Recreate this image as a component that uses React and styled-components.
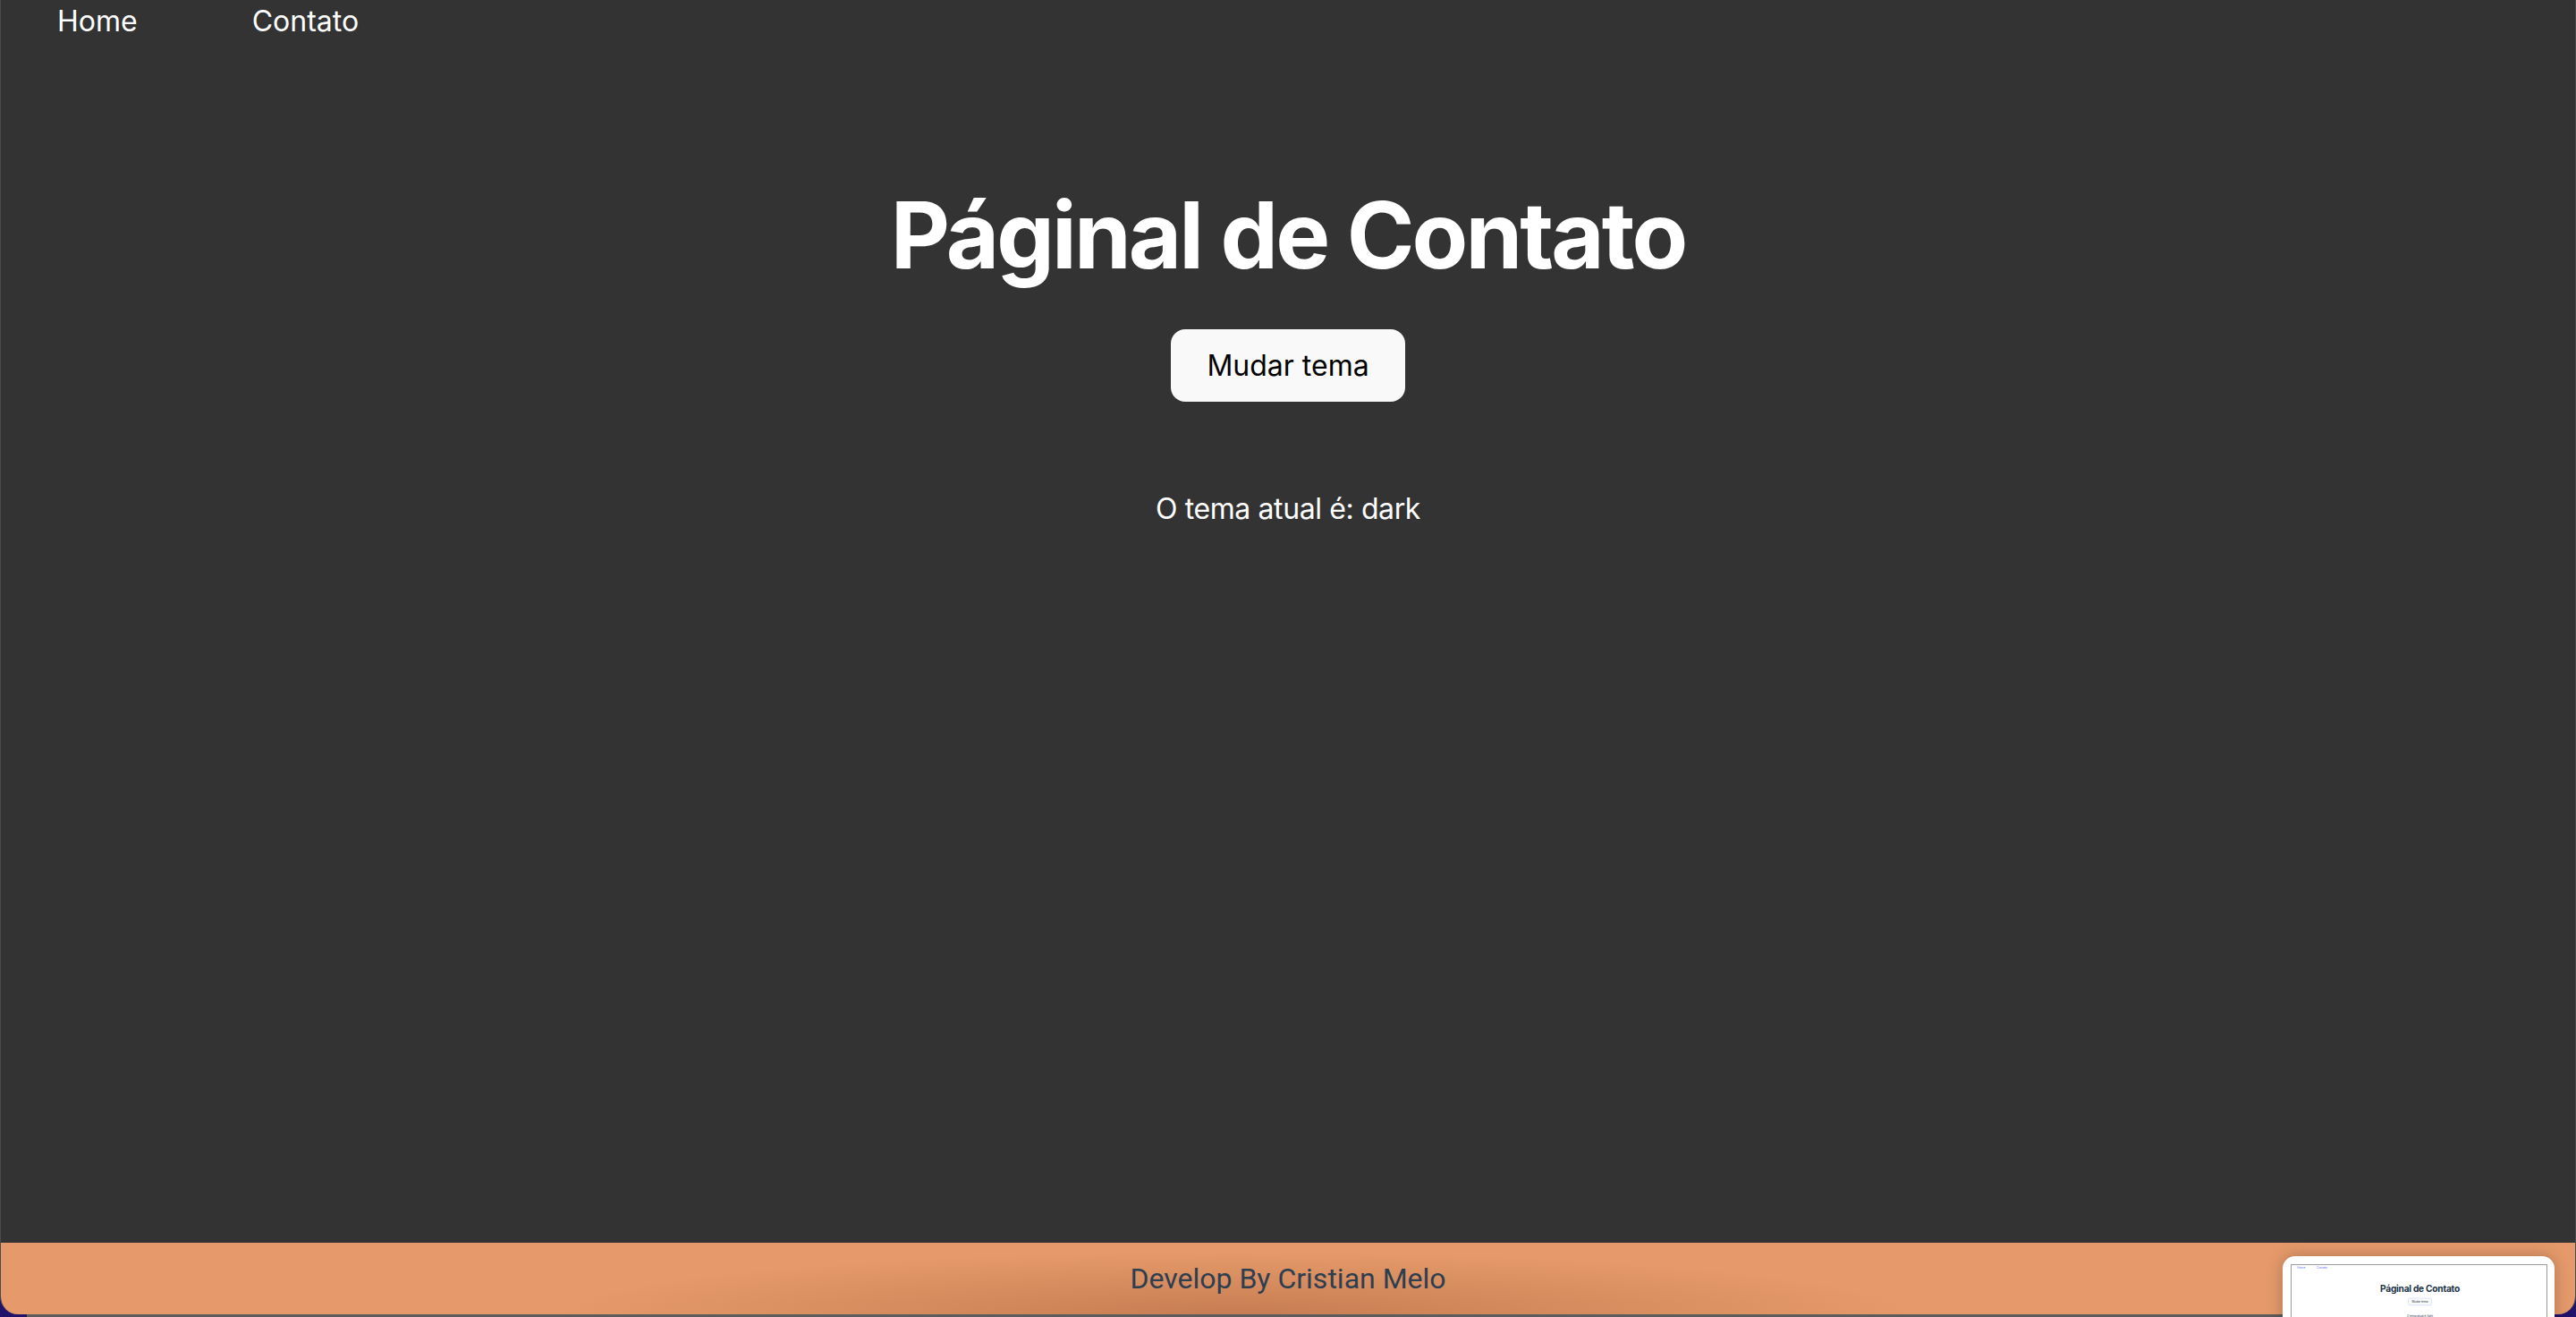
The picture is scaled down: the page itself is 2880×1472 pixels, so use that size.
import React from "react";
import styled, { createGlobalStyle, ThemeProvider } from "styled-components";

const themes = {
  dark: {
    bg: "#333333",
    text: "#ffffff",
    link: "#ffffff",
    buttonBg: "#f9f9f9",
    buttonText: "#000000",
    buttonBorder: "transparent",
  },
  light: {
    bg: "#ffffff",
    text: "#213547",
    link: "#646cff",
    buttonBg: "#f9f9f9",
    buttonText: "#213547",
    buttonBorder: "#5b8cff",
  },
};

const GlobalStyle = createGlobalStyle`
  html, body {
    margin: 0;
    padding: 0;
    background: #22136a;
    overflow: hidden;
  }
  #root {
    height: 1472px;
  }
`;

function Page({ mode }) {
  return (
    <ThemeProvider theme={themes[mode]}>
      <Screen>
        <Nav>
          <NavLink>Home</NavLink>
          <NavLink>Contato</NavLink>
        </Nav>
        <Main>
          <Title>Páginal de Contato</Title>
          <ThemeButton>Mudar tema</ThemeButton>
          <Current>O tema atual é: {mode}</Current>
        </Main>
      </Screen>
    </ThemeProvider>
  );
}

export default function App() {
  return (
    <>
      <GlobalStyle />
      <Desktop>
        <Window>
          <Page mode="dark" />
          <Footer>Develop By Cristian Melo</Footer>
        </Window>
        <DockEdge />
        {/* floating screenshot preview, macOS style */}
        <Preview>
          <PreviewFrame>
            <Mini>
              <Page mode="light" />
            </Mini>
          </PreviewFrame>
        </Preview>
      </Desktop>
    </>
  );
}

const Desktop = styled.div`
  position: relative;
  height: 1472px;
  display: flex;
  flex-direction: column;
`;

const Window = styled.div`
  flex: 1;
  display: flex;
  flex-direction: column;
  border-radius: 0 0 20px 20px;
  overflow: hidden;
  border-left: 1px solid #4b4b4b;
  border-right: 1px solid #4b4b4b;
`;

const Screen = styled.div`
  flex: 1;
  height: 1389px;
  background: ${(p) => p.theme.bg};
  color: ${(p) => p.theme.text};
  font-family: Inter, "Noto Sans", sans-serif;
`;

const Nav = styled.nav`
  display: flex;
  gap: 128px;
  padding-left: 63px;
  height: 48px;
  align-items: center;
`;

const NavLink = styled.a`
  font-size: 32px;
  line-height: 48px;
  color: ${(p) => p.theme.link};
  cursor: pointer;
`;

const Main = styled.main`
  display: flex;
  flex-direction: column;
  align-items: center;
  padding-top: 159px;
`;

const Title = styled.h1`
  margin: 0;
  font-size: 102.4px;
  line-height: 1.1;
  font-weight: 700;
  letter-spacing: -2.9px;
`;

const ThemeButton = styled.button`
  margin-top: 48px;
  padding: 19.2px 38.4px;
  border-radius: 16px;
  border: 2px solid ${(p) => p.theme.buttonBorder};
  background: ${(p) => p.theme.buttonBg};
  color: ${(p) => p.theme.buttonText};
  font-family: Inter, "Noto Sans", sans-serif;
  font-size: 32px;
  font-weight: 400;
  line-height: normal;
  cursor: pointer;
`;

const Current = styled.p`
  margin: 96px 0 0;
  font-size: 32px;
  line-height: 48px;
  letter-spacing: -0.4px;
`;

const Footer = styled.footer`
  height: 80px;
  display: flex;
  align-items: center;
  justify-content: center;
  background:
    radial-gradient(ellipse 760px 70px at 48% 100%, rgba(160, 90, 50, 0.45), rgba(160, 90, 50, 0) 100%),
    #e69a6b;
  color: #2c3e50;
  font-family: Roboto, "Liberation Sans", sans-serif;
  font-size: 32px;
`;

const DockEdge = styled.div`
  height: 3px;
  margin: 0 30px;
  background: #5c5c5c;
`;

const Preview = styled.div`
  position: absolute;
  left: 2552px;
  top: 1404px;
  width: 304px;
  height: 100px;
  background: #ffffff;
  border-radius: 14px;
  box-shadow: 0 0 18px rgba(0, 0, 0, 0.25);
  padding: 9px 0 0 9px;
  box-sizing: border-box;
`;

const PreviewFrame = styled.div`
  width: 287px;
  height: 100%;
  border: 1px solid #9a9a9a;
  border-bottom: none;
  overflow: hidden;
  box-sizing: border-box;
`;

const Mini = styled.div`
  width: 2870px;
  transform: scale(0.1);
  transform-origin: 0 0;
`;
